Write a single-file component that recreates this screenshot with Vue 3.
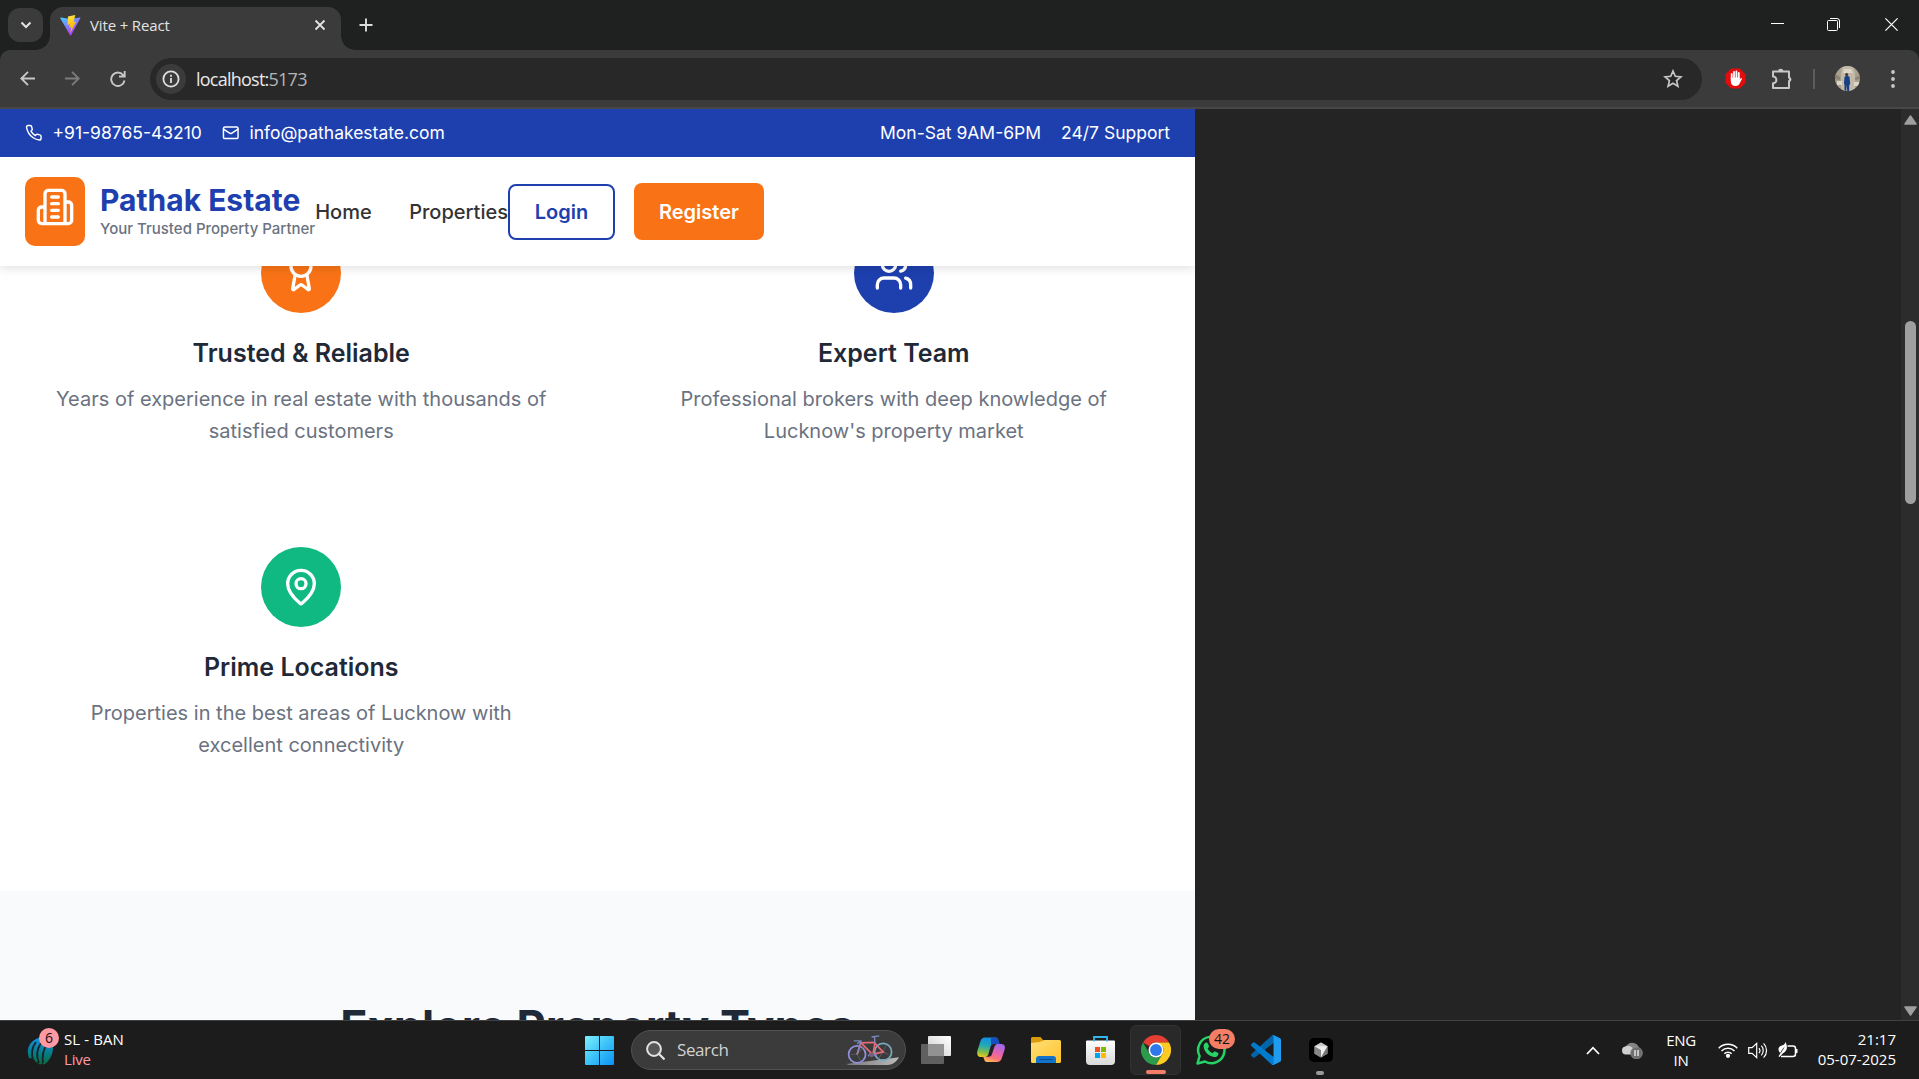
<script setup>
const features = [
  {
    title: 'Trusted & Reliable',
    lines: ['Years of experience in real estate with thousands of', 'satisfied customers'],
    tone: 'orange',
    icon: 'award',
  },
  {
    title: 'Expert Team',
    lines: ['Professional brokers with deep knowledge of', "Lucknow's property market"],
    tone: 'blue',
    icon: 'users',
  },
  {
    title: 'Prime Locations',
    lines: ['Properties in the best areas of Lucknow with', 'excellent connectivity'],
    tone: 'green',
    icon: 'pin',
  },
]
</script>

<template>
  <div class="screen">
    <div class="tabstrip">
      <div class="tab-search">
        <svg width="12" height="8" viewBox="0 0 12 8"><path d="M1.5 1.5 6 6l4.500-4.500" fill="none" stroke="#e3e3e3" stroke-width="2" /></svg>
      </div>
      <div class="tab">
        <svg class="vite" width="21" height="21" viewBox="0 0 21 21">
          <defs>
            <linearGradient id="va" x1="0" y1="0" x2=".6" y2="1"><stop offset="0" stop-color="#41d1ff" /><stop offset="1" stop-color="#bd34fe" /></linearGradient>
            <linearGradient id="vb" x1=".4" y1="0" x2=".6" y2="1"><stop offset="0" stop-color="#ffea83" /><stop offset=".1" stop-color="#ffdd35" /><stop offset="1" stop-color="#ffa800" /></linearGradient>
          </defs>
          <path d="M20.300 3.200 11 20.200a.5.500 0 0 1-.9 0L.3 3.200a.5.500 0 0 1 .5-.8l9.600 1.700 9.400-1.700a.5.500 0 0 1 .5.800Z" fill="url(#va)" />
          <path d="m15 .1-7 1.400-.5 8c0 .2.200.300.400.300l2-.5-.6 3.400 2-.4-.9 4.700c.1.300.400.300.500 0l5-10c.1-.2-.1-.4-.3-.4l-2 .4 1.600-6.600c0-.2-.1-.3-.2-.3Z" fill="url(#vb)" />
        </svg>
        <span class="tab-title">Vite + React</span>
        <svg width="12" height="12" viewBox="0 0 12 12"><path d="m1.500 1.500 9 9m0-9-9 9" stroke="#e3e3e3" stroke-width="1.800" /></svg>
      </div>
      <svg class="plus" width="14" height="14" viewBox="0 0 14 14"><path d="M7 .5v13M.5 7h13" stroke="#dcdcdc" stroke-width="1.900" /></svg>
      <div class="win-controls">
        <svg width="13" height="13" viewBox="0 0 13 13"><path d="M0 5.500h13" stroke="#fff" /></svg>
        <svg width="13" height="13" viewBox="0 0 13 13" fill="none" stroke="#fff"><rect x=".5" y="2.500" width="10" height="10" rx="1" /><path d="M3 .5h7a2.500 2.500 0 0 1 2.500 2.500v7" /></svg>
        <svg width="13" height="13" viewBox="0 0 13 13"><path d="m.4.400 12.200 12.200m0-12.200L.4 12.600" stroke="#fff" stroke-width="1.200" /></svg>
      </div>
    </div>

    <div class="toolbar-wrap">
      <div class="toolbar">
        <svg class="back" width="15" height="15" viewBox="0 0 15 15" fill="none" stroke="#c7c7c7" stroke-width="1.900"><path d="M15 7.500H1.500M8 .8 1.300 7.500 8 14.200" /></svg>
        <svg class="forward" width="15" height="15" viewBox="0 0 15 15" fill="none" stroke="#7c7c7c" stroke-width="1.900"><path d="M0 7.500h13.500M7 .8l6.700 6.700L7 14.200" /></svg>
        <svg class="reload" width="16" height="16" viewBox="0 0 16 16" fill="none" stroke="#c7c7c7" stroke-width="1.900"><path d="M13.600 4.700A6.700 6.700 0 1 0 14.500 9.500M14.700 0v5.500H9" /></svg>
        <div class="address">
          <div class="site-info">
            <svg width="18" height="18" viewBox="0 0 18 18" fill="none" stroke="#dedede" stroke-width="1.800"><circle cx="9" cy="9" r="7.600" /><path d="M9 8v5M9 4.800v1.900" /></svg>
          </div>
          <span class="url">localhost:<i>5173</i></span>
          <svg class="star" width="20" height="19" viewBox="0 0 20 19"><path d="m10 2 2.300 5.300 5.600.5-4.300 3.800 1.300 5.600L10 14.200l-4.900 3 1.300-5.600L2.100 7.800l5.600-.5Z" fill="none" stroke="#c7c7c7" stroke-width="1.700" /></svg>
        </div>
        <svg class="blocker" width="21" height="21" viewBox="0 0 21 21">
          <path d="M6.200.5h8.600l5.700 5.700v8.600l-5.700 5.700H6.200L.5 14.800V6.200Z" fill="#e40d0d" />
          <path d="M6.700 11V6m2.300 4V3.900m2.400 6V3.500m2.400 7V5" stroke="#fff" stroke-width="1.800" stroke-linecap="round" />
          <path d="M5.800 9.500h8.900v2.300l1-1.500c.5-.6 1.500-.2 1.200.7l-2.400 4.800c-.8 1.500-2 2.200-4 2.200-3 0-4.700-1.800-4.700-4.500Z" fill="#fff" />
        </svg>
        <svg class="puzzle" width="22" height="22" viewBox="0 0 22 22"><path d="M2 3.500h16v6.200a2 2 0 0 1 0 3.500V20H2v-4.700a3 3 0 0 0 0-6.800Z" fill="none" stroke="#c7c7c7" stroke-width="2" stroke-linejoin="round" /><path d="M7 3.500a2.700 2.700 0 0 1 5.400 0Zm11 5.500a2.500 2.500 0 0 1 0 5Z" fill="#c7c7c7" /></svg>
        <span class="divider"></span>
        <svg class="avatar" width="25" height="25" viewBox="0 0 25 25">
          <defs><clipPath id="ac"><circle cx="12.500" cy="12.500" r="12.500" /></clipPath></defs>
          <g clip-path="url(#ac)">
            <path fill="#a99f8f" d="M0 0h25v25H0z" />
            <path fill="#c2b9a8" d="M7 0h11l2 7v18H6V8Z" />
            <path fill="#8d8373" d="M0 8l5 3v3L0 13zM25 9l-5 3v2l5-1z" />
            <path fill="#ddd5c6" d="M9 3h7l2 4H8zM2 15h5v4H2zM19 16h5v4h-5z" />
            <circle cx="11.700" cy="8.600" r="1.600" fill="#473a35" />
            <path fill="#173f86" d="M9.500 11c1-1.300 4.200-1.300 5 0l.7 7-1 1v6h-2l-.5-6-.5 6H9.500v-6L9 17Z" />
          </g>
        </svg>
        <svg class="menu" width="4" height="18" viewBox="0 0 4 18" fill="#c7c7c7"><circle cx="2" cy="2" r="1.900" /><circle cx="2" cy="9" r="1.900" /><circle cx="2" cy="16" r="1.900" /></svg>
      </div>
    </div>

    <div class="viewport">
      <div class="page">
        <div class="topbar">
          <svg width="17.500" height="17.500" viewBox="0 0 24 24" class="line"><path d="M22 16.920v3a2 2 0 0 1-2.180 2 19.790 19.790 0 0 1-8.630-3.070 19.500 19.500 0 0 1-6-6 19.790 19.790 0 0 1-3.070-8.670A2 2 0 0 1 4.110 2h3a2 2 0 0 1 2 1.720 12.840 12.840 0 0 0 .7 2.810 2 2 0 0 1-.45 2.110L8.090 9.910a16 16 0 0 0 6 6l1.270-1.270a2 2 0 0 1 2.110-.45 12.840 12.840 0 0 0 2.810.7A2 2 0 0 1 22 16.920z" /></svg>
          <span class="phone">+91-98765-43210</span>
          <svg width="17.500" height="17.500" viewBox="0 0 24 24" class="line"><rect x="2" y="4" width="20" height="16" rx="2" /><path d="m22 7-8.970 5.700a1.940 1.940 0 0 1-2.060 0L2 7" /></svg>
          <span class="mail">info@pathakestate.com</span>
          <span class="hours">Mon-Sat 9AM-6PM</span>
          <span>24/7 Support</span>
        </div>

        <header class="header">
          <div class="logo">
            <svg width="40" height="40" viewBox="0 0 24 24" class="line"><path d="M6 22V4a2 2 0 0 1 2-2h8a2 2 0 0 1 2 2v18ZM6 12H4a2 2 0 0 0-2 2v6a2 2 0 0 0 2 2h2M18 9h2a2 2 0 0 1 2 2v9a2 2 0 0 1-2 2h-2M10 6h4M10 10h4M10 14h4M10 18h4" /></svg>
          </div>
          <div class="brand">
            <span class="name">Pathak Estate</span>
            <span class="tagline">Your Trusted Property Partner</span>
          </div>
          <nav class="nav"><a>Home</a><a>Properties</a></nav>
          <div class="actions">
            <button class="login">Login</button>
            <button class="register">Register</button>
          </div>
        </header>

        <section class="features">
          <article v-for="f in features" :key="f.title" class="card">
            <div class="badge" :class="f.tone">
              <svg width="40" height="40" viewBox="0 0 24 24" class="line">
                <template v-if="f.icon === 'award'">
                  <circle cx="12" cy="8" r="6" />
                  <path d="m15.477 12.890 1.515 8.526a.5.500 0 0 1-.81.470l-3.580-2.687a1 1 0 0 0-1.197 0l-3.586 2.686a.5.500 0 0 1-.81-.469l1.514-8.526" />
                </template>
                <template v-else-if="f.icon === 'users'">
                  <circle cx="9" cy="7" r="4" />
                  <path d="M16 21v-2a4 4 0 0 0-4-4H6a4 4 0 0 0-4 4v2M22 21v-2a4 4 0 0 0-3-3.870M16 3.130a4 4 0 0 1 0 7.750" />
                </template>
                <template v-else>
                  <path d="M20 10c0 4.993-5.539 10.193-7.399 11.799a1 1 0 0 1-1.202 0C9.539 20.193 4 14.993 4 10a8 8 0 0 1 16 0" />
                  <circle cx="12" cy="10" r="3" />
                </template>
              </svg>
            </div>
            <h3>{{ f.title }}</h3>
            <p><span v-for="l in f.lines" :key="l">{{ l }}</span></p>
          </article>
        </section>

        <section class="types"><h2>Explore Property Types</h2></section>
      </div>
      <div class="scrollbar">
        <svg width="13" height="10" viewBox="0 0 13 10"><path d="M6.500 1 12 9H1Z" fill="#9f9f9f" stroke="#9f9f9f" stroke-width="1.500" stroke-linejoin="round" /></svg>
        <span class="thumb"></span>
        <svg width="13" height="10" viewBox="0 0 13 10"><path d="M6.500 9 12 1H1Z" fill="#9f9f9f" stroke="#9f9f9f" stroke-width="1.500" stroke-linejoin="round" /></svg>
      </div>
    </div>

    <footer class="taskbar">
      <div class="widget">
        <div class="widget-icon">
          <svg width="28" height="30" viewBox="0 0 28 30">
            <defs><linearGradient id="wg" x1="0" y1="0" x2="0" y2="1"><stop offset="0" stop-color="#1593e6" /><stop offset=".5" stop-color="#087f98" /><stop offset="1" stop-color="#0b6d3d" /></linearGradient></defs>
            <path d="M2 22C-2 12 4 3 15 1c6 0 11 4 11 11 0 7-4 13-8 16-2 1-3 0-2-2-1 2-3 3-4 2-1 0-1-1-1-2-1 1-3 0-3-2-2 0-2-2-2-3-1 1-3 2-4 1Z" fill="url(#wg)" />
            <path d="M9 6c-4 5-5 11-3 18M14 7c-4 6-5 13-2 20M20 8c-4 6-5 12-4 19" fill="none" stroke="#17232a" stroke-width="1.800" />
          </svg>
          <b>6</b>
        </div>
        <div class="widget-text"><span>SL - BAN</span><span class="live">Live</span></div>
      </div>

      <svg class="start" width="29" height="29" viewBox="0 0 29 29">
        <defs><linearGradient id="sg" gradientUnits="userSpaceOnUse" x1="0" y1="0" x2="29" y2="29"><stop offset="0" stop-color="#7df0ff" /><stop offset=".5" stop-color="#3dc3f8" /><stop offset="1" stop-color="#0a91f6" /></linearGradient></defs>
        <path d="M1 0h13v14H0V1a1 1 0 0 1 1-1Zm14 0h13a1 1 0 0 1 1 1v13H15ZM0 15h14v14H1a1 1 0 0 1-1-1Zm15 0h14v13a1 1 0 0 1-1 1H15Z" fill="url(#sg)" />
      </svg>

      <div class="search">
        <svg width="19" height="19" viewBox="0 0 19 19" fill="none" stroke="#e2e2e2" stroke-width="2"><circle cx="8" cy="8" r="6.900" fill="#575757" /><path d="m12.800 12.800 5 5" stroke-width="2.300" stroke-linecap="round" /></svg>
        <span>Search</span>
        <svg class="bike" width="54" height="31" viewBox="0 0 56 32" fill="none">
          <defs><linearGradient id="bg" x1="0" x2="1"><stop offset="0" stop-color="#777" /><stop offset="1" stop-color="#bbb" /></linearGradient></defs>
          <path d="M0 30 55 23c-3 5-7 8-12 8H3Z" fill="url(#bg)" />
          <circle cx="11.500" cy="20" r="8.800" stroke="#918fdc" stroke-width="1.800" />
          <circle cx="38.500" cy="17.500" r="8.800" stroke="#79a9bf" stroke-width="1.800" />
          <path d="m11.500 20 9-10m-9 10H5m6.500 0 4 7M38.500 17.500l6 3m-6-3-5 7m5-7 3-7" stroke="#596078" stroke-width=".8" />
          <path d="M11.500 20 15.500 8l12 12 11-2.500L30 8.500l-2 11M15 8l15-.5" stroke="#e56b76" stroke-width="1.800" />
          <path d="m11.500 20 4-14H8m7.500 0-4 3M30 8.500 29.500 2m-3 0 8-1.200M26 20l6 1m-7-2-2 3" stroke="#7c87bd" stroke-width="1.500" />
          <circle cx="26.500" cy="20.500" r="2.500" fill="#75617d" />
        </svg>
      </div>

      <div class="apps">
        <div class="app">
          <svg width="30" height="28" viewBox="0 0 30 28"><defs><linearGradient id="tg" x1="1" y1="0" x2="0" y2="1"><stop offset="0" stop-color="#fff" /><stop offset="1" stop-color="#ccc" /></linearGradient></defs><rect x="7" width="23" height="20" rx="1" fill="url(#tg)" /><path d="M1 8h22v19a1 1 0 0 1-1 1H1a1 1 0 0 1-1-1V9a1 1 0 0 1 1-1Z" fill="#606060" /><path d="M7 8h16v12H7Z" fill="#929292" /></svg>
        </div>
        <div class="app">
          <svg width="28" height="26" viewBox="0 0 28 26">
            <defs>
              <linearGradient id="ca" x1=".3" y1="0" x2=".1" y2="1"><stop offset="0" stop-color="#168de2" /><stop offset=".4" stop-color="#22aab6" /><stop offset=".75" stop-color="#8bbd41" /><stop offset="1" stop-color="#f4ce1c" /></linearGradient>
              <linearGradient id="cb" x1=".7" y1="0" x2=".3" y2="1"><stop offset="0" stop-color="#a067e8" /><stop offset=".45" stop-color="#e563b1" /><stop offset=".75" stop-color="#fb7275" /><stop offset="1" stop-color="#ffba55" /></linearGradient>
            </defs>
            <path d="M8 .5h10.500c2 0 2.500 1.500 3 3.500l1 3H17c-2 0-3 1-3.500 3l-2 7c-.7 2-1.500 3-3.500 3H3.500C.5 20-.5 17 .5 13.500L3.500 4C4.300 1.500 6 .5 8 .5Z" fill="url(#ca)" />
            <path d="M14 .5h4.500c2 0 2.500 1.500 3 3.500l1 3H17c-1.500 0-2.500.5-3 2Z" fill="#174fc2" />
            <path d="M20 25H10c-2 0-2.500-1.500-3-3l-.7-2H8c2 0 3-1 3.500-3l2-7c.5-2 1.500-3 3.500-3h7.500c3 0 4 2.500 3 6L24.500 22c-.8 2-2.500 3-4.500 3Z" fill="url(#cb)" />
            <path d="M17 7c-2 0-3 1-3.500 3l-2 7c-.4 1.400-1 2.300-2 2.800h2c2 0 3-1 3.500-2.800L17 11c.6-2 1.400-3.500 3-4Z" fill="#222" />
          </svg>
        </div>
        <div class="app">
          <svg width="30" height="27" viewBox="0 0 30 27"><defs><linearGradient id="fg" x1="0" y1="0" x2="1" y2="1"><stop offset="0" stop-color="#ffdf78" /><stop offset="1" stop-color="#ffc32c" /></linearGradient></defs><path d="M0 1.500A1.500 1.500 0 0 1 1.500 0h8L12 3v5H0Z" fill="#dc9b0d" /><path d="M0 6 9 5l4-2h15.500A1.500 1.500 0 0 1 30 4.500v20a1.500 1.500 0 0 1-1.500 1.500h-27A1.500 1.500 0 0 1 0 24.500Z" fill="url(#fg)" /><path d="M5 26v-4a3 3 0 0 1 3-3h14a3 3 0 0 1 3 3v4Z" fill="#1173c9" /><path d="M8.500 22.500h13" stroke="#0a4b91" /></svg>
        </div>
        <div class="app">
          <svg width="29" height="29" viewBox="0 0 29 29"><defs><linearGradient id="mg" x2="0" y2="1"><stop offset="0" stop-color="#fff" /><stop offset="1" stop-color="#d9d9d9" /></linearGradient></defs><path d="M8 6V1h13v5" fill="none" stroke="#32b7ec" stroke-width="1.800" /><path d="M1 4.500h27a1 1 0 0 1 1 1V25a4 4 0 0 1-4 4H4a4 4 0 0 1-4-4V5.500a1 1 0 0 1 1-1Z" fill="url(#mg)" /><path d="M8 5.500V3.500M21 5.500V3.500" stroke="#32b7ec" stroke-width="1.800" /><path d="M9 11h5v5H9Z" fill="#f25022" /><path d="M15 11h5v5h-5Z" fill="#7fba00" /><path d="M9 17h5v5H9Z" fill="#00a4ef" /><path d="M15 17h5v5h-5Z" fill="#ffb900" /></svg>
        </div>
        <div class="app active">
          <svg width="30" height="30" viewBox="0 0 48 48"><path d="M24 0a24 24 0 0 1 20.800 12H24a12 12 0 0 0-10.400 6L3.200 12A24 24 0 0 1 24 0Z" fill="#e63e32" /><path d="M3.200 12A24 24 0 0 0 24 48l10.400-18a12 12 0 0 1-20.800 0Z" fill="#2b9c4b" /><path d="M44.800 12A24 24 0 0 1 24 48l10.400-18A12 12 0 0 0 34.400 18L24 12Z" fill="#fdcb22" /><circle cx="24" cy="24" r="12" fill="#fff" /><circle cx="24" cy="24" r="9.500" fill="#2f78ec" /></svg>
          <span class="running"></span>
        </div>
        <div class="app">
          <svg width="30" height="30" viewBox="0 0 30 30"><path d="M1.500 28.500 3.600 21A13.200 13.200 0 1 1 9 26.500Z" fill="#1c1c1c" stroke="#25d366" stroke-width="2.500" stroke-linejoin="round" /><path d="M10.500 7.500c.6 0 .9.200 1.200.8l1.200 2.800c.2.500 0 1-.4 1.400l-.9 1c1.100 2.200 2.700 3.700 5 4.700l1.200-1.400c.4-.5.800-.5 1.300-.3l2.700 1.300c.6.300.7.600.6 1.200-.4 2-2 3.300-4.200 3.100C12.600 21.600 8 16.500 7.600 11.600c0-2 1.100-4.100 2.900-4.100Z" fill="#25d366" /></svg>
          <b class="count">42</b>
        </div>
        <div class="app">
          <svg width="30" height="30" viewBox="0 0 100 100"><path d="M96.500 10.800 75.900.9a6.200 6.200 0 0 0-7.100 1.200L1.400 63.600a4.200 4.200 0 0 0 0 6.200l5.500 5a4.200 4.200 0 0 0 5.300.2L93.400 13.400a4.100 4.100 0 0 1 6.600 3.300v-.2a6.300 6.300 0 0 0-3.500-5.700Z" fill="#0065a9" /><path d="m96.500 89.300-20.600 9.900a6.200 6.200 0 0 1-7.100-1.200L1.400 36.500a4.200 4.200 0 0 1 0-6.200l5.500-5a4.200 4.200 0 0 1 5.300-.2l81.200 61.600a4.100 4.100 0 0 0 6.600-3.300v.200a6.300 6.300 0 0 1-3.500 5.700Z" fill="#007acc" /><path d="M75.900 99.200A6.200 6.200 0 0 1 68.800 98c2.300 2.300 6.300.7 6.300-2.600V4.700c0-3.300-4-4.900-6.300-2.600A6.200 6.200 0 0 1 75.900.9l20.600 9.900a6.300 6.300 0 0 1 3.500 5.700v67.100a6.300 6.300 0 0 1-3.500 5.700Z" fill="#1f9cf0" /></svg>
        </div>
        <div class="app">
          <svg width="24" height="24" viewBox="0 0 24 24"><rect width="24" height="24" rx="5" fill="#000" /><path d="m12 4.500 6.500 3.700v7.600L12 19.500l-6.500-3.700V8.200Z" fill="#9a9a9a" /><path d="m5.500 8.200 6.500 3.800v7.500l-6.500-3.700Z" fill="#858585" /><path d="m12 4.500 6.500 3.700L12 10 5.500 8.200Z" fill="#c9c9c9" /><path d="M5.500 8.200h13L12 19.500V12Z" fill="#eee" /><path d="M18.500 8.200 12 19.500l6.500-3.700Z" fill="#777" /></svg>
          <span class="running idle"></span>
        </div>
      </div>

      <div class="tray">
        <svg width="14" height="9" viewBox="0 0 14 9"><path d="m1 8 6-6.300L13 8" fill="none" stroke="#fff" stroke-width="1.800" /></svg>
        <svg class="cloud" width="21" height="18" viewBox="0 0 21 18"><path d="M5 13a5 5 0 0 1 0-9 7 7 0 0 1 12 3v6Z" fill="#858585" /><path d="M4 13.500a4 4 0 0 1 0-8c2-1 5-.5 6.500 1.500l4 1v5.500Z" fill="#d0d0d0" /><circle cx="14.500" cy="12" r="5.900" fill="#6e6e6e" stroke="#8b8b8b" stroke-width=".7" /><path d="M13 9v6m3-6v6" stroke="#fff" stroke-width="1.200" /></svg>
        <div class="lang"><span>ENG</span><span>IN</span></div>
        <svg class="wifi" width="20" height="16" viewBox="0 0 20 16" fill="none" stroke="#fff" stroke-width="1.500"><path d="M.7 6.200a13 13 0 0 1 18.600 0M3.500 9a9.200 9.200 0 0 1 13 0M6.300 11.700a5.300 5.300 0 0 1 7.400 0" /><circle cx="10" cy="13.800" r="1.400" fill="#fff" /></svg>
        <svg class="speaker" width="20" height="17" viewBox="0 0 20 17" fill="none" stroke="#fff" stroke-width="1.200"><path d="M.7 5.700h3.400l4.600-4.300v14.200l-4.600-4.300H.7ZM11 6a4 4 0 0 1 0 5M13.300 3.700a7 7 0 0 1 0 9.600M15.600 1.300a10.300 10.300 0 0 1 0 14.400" /></svg>
        <svg class="battery" width="20" height="17" viewBox="0 0 20 17"><path d="M9.500 4h5.500a2.500 2.500 0 0 1 2.500 2.500V12a2.500 2.500 0 0 1-2.500 2.500H3" fill="none" stroke="#fff" stroke-width="1.500" /><path d="M18 7h1.500v4H18Z" fill="#fff" /><path d="M7.500 0c2 4 2.500 9-2.500 11.300L1.500 15l-1-.7 2-3C-1 8 .5 4 4 3.500 6 3 7 2 7.500 0Z" fill="#fff" /><path d="M6 5.500 2.500 11" stroke="#1c1c1c" stroke-width=".8" /></svg>
        <div class="clock"><span>21:17</span><span>05-07-2025</span></div>
      </div>
    </footer>
  </div>
</template>

<style>
body { margin: 0; background: #1c1c1c; }
</style>

<style scoped>
* { box-sizing: border-box; }
svg { display: block; flex: none; }
.screen { width: 1919px; height: 1079px; display: flex; flex-direction: column; overflow: hidden; font-family: "Open Sans", "Noto Sans", sans-serif; background: #1f2120; }
.line { fill: none; stroke: #fff; stroke-width: 2; stroke-linecap: round; stroke-linejoin: round; }

.tabstrip { height: 50px; flex: none; display: flex; align-items: flex-start; background: #1f2120; }
.tab-search { width: 35px; height: 34px; margin: 8px 0 0 8px; border-radius: 12px; background: #3b3b3b; display: flex; align-items: center; justify-content: center; }
.tab { position: relative; width: 291px; height: 43px; margin: 7px 0 0 7px; padding: 0 15px 7px 10px; border-radius: 13px 13px 0 0; background: #3b3b3b; display: flex; align-items: center; }
.tab::before, .tab::after { content: ''; position: absolute; bottom: 0; width: 14px; height: 14px; }
.tab::before { left: -14px; background: radial-gradient(circle at 0 0, transparent 13.500px, #3b3b3b 14px); }
.tab::after { right: -14px; background: radial-gradient(circle at 100% 0, transparent 13.500px, #3b3b3b 14px); }
.tab-title { flex: 1; margin: 0 0 1px 9px; font-size: 15px; line-height: 20px; letter-spacing: -0.150px; color: #e3e3e3; white-space: nowrap; }
.plus { margin: 18px 0 0 18px; }
.win-controls { display: flex; gap: 43px; margin: 18px 21px 0 auto; }
.win-controls svg:nth-child(2) { margin-right: 2px; }

.toolbar-wrap { height: 59px; flex: none; background: #1f2120; }
.toolbar { height: 59px; display: flex; align-items: center; background: #3b3b3b; border-bottom: 2px solid #474747; border-radius: 10px 10px 0 0; }
.back { margin-left: 20px; }
.forward { margin-left: 30px; }
.reload { margin-left: 30px; }
.address { width: 1552px; height: 42px; margin-left: 24px; padding: 0 19px 0 6px; border-radius: 21px; background: #282828; display: flex; align-items: center; }
.site-info { width: 30px; height: 30px; border-radius: 50%; background: #3b3b3b; display: flex; align-items: center; justify-content: center; }
.url { flex: 1; margin-left: 10px; font-size: 18px; line-height: 24px; letter-spacing: -0.760px; color: #e8e8e8; }
.url i { font-style: normal; color: #b5b5b5; }
.blocker { margin-left: 23px; }
.puzzle { margin-left: 25px; }
.divider { width: 2px; height: 20px; margin-left: 20px; background: #5c5c5c; }
.avatar { margin-left: 20px; }
.menu { margin-left: 31px; }

.viewport { height: 911px; flex: none; display: flex; justify-content: space-between; overflow: hidden; background: #242424; }
.page { width: 1195px; height: 911px; overflow: hidden; background: #fff; font-family: Inter, "Liberation Sans", sans-serif; }
.topbar { position: relative; z-index: 2; height: 48px; padding: 0 25px; display: flex; align-items: center; background: #1e40af; color: #fff; font-size: 17.500px; font-weight: 400; white-space: nowrap; }
.topbar span { line-height: 20px; padding-bottom: 1px; }
.topbar .phone { margin: 0 20px 0 10px; }
.topbar .mail { margin-left: 10px; }
.topbar .hours { margin: 0 20px 0 auto; }
.header { position: relative; z-index: 1; height: 109px; padding: 0 25px; display: flex; align-items: center; background: #fff; box-shadow: 0 2px 10px rgba(0, 0, 0, 0.130); white-space: nowrap; }
.logo { width: 60px; height: 69px; padding: 10px; margin-right: 15px; border-radius: 10px; background: #f97316; }
.brand { display: flex; flex-direction: column; padding-bottom: 4px; }
.name { font-size: 30px; line-height: 36px; font-weight: 700; color: #1e40af; }
.tagline { padding-top: 1px; font-size: 15px; line-height: 19px; font-weight: 500; color: #6b7280; }
.nav { display: flex; gap: 37.500px; font-size: 20px; font-weight: 500; color: #333; }
.actions { display: flex; align-items: center; gap: 19px; }
.actions button { font: 600 20px/24px Inter, sans-serif; border-radius: 8px; }
.login { width: 107px; height: 56px; padding: 0; background: #fff; border: 2px solid #1e40af; color: #1e40af; }
.register { width: 130px; height: 57px; padding: 0; background: #f97316; border: 0; color: #fff; }

.features { margin-top: -163px; height: 788px; padding: 100px 25px; display: grid; grid-template-columns: 552.500px 552.500px; gap: 40px; align-content: start; background: #fff; }
.card { height: 274px; padding: 30px 0; display: flex; flex-direction: column; align-items: center; text-align: center; }
.badge { width: 80px; height: 80px; border-radius: 50%; display: flex; align-items: center; justify-content: center; }
.orange { background: #f97316; }
.blue { background: #1e40af; }
.green { background: #10b981; }
.card h3 { margin: 25px 0 15px; font-size: 25px; line-height: 30px; font-weight: 600; color: #1f2937; }
.card p { margin: 0; display: flex; flex-direction: column; font-size: 20px; line-height: 32px; color: #6b7280; white-space: nowrap; }
.types { height: 220px; padding-top: 100px; background: #f8fafc; }
.types h2 { margin: 0; font-size: 45px; line-height: 72px; font-weight: 700; text-align: center; color: #1f2937; white-space: nowrap; }
.scrollbar { width: 18px; height: 911px; padding: 6px 0 4px 3px; display: flex; flex-direction: column; background: #2c2c2c; }
.thumb { width: 11px; height: 183px; margin: 196px 0 auto 1px; border-radius: 6px; background: #9f9f9f; }

.taskbar { height: 59px; flex: none; display: flex; align-items: center; border-top: 1px solid #414141; background: #1c1c1c; color: #fff; font-size: 15px; line-height: 20px; white-space: nowrap; }
.widget { width: 558px; display: flex; align-items: center; padding-left: 27px; }
.widget-icon { position: relative; width: 37px; height: 34px; padding-top: 3px; }
.widget-icon b { position: absolute; left: 12px; top: -5px; width: 20px; height: 20px; border-radius: 50%; background: #ff99a4; color: #111; font-weight: 400; font-size: 14px; text-align: center; }
.widget-text { display: flex; flex-direction: column; padding-bottom: 2px; }
.widget-text span:first-child { letter-spacing: 0.100px; }
.live { color: #ff99a4; letter-spacing: -0.200px; }
.start { margin-left: 27px; }
.search { width: 275px; height: 40px; margin-left: 17px; padding: 0 5px 0 14px; border: 1px solid #515151; border-radius: 20px; background: #3b3b3b; display: flex; align-items: center; }
.search span { flex: 1; margin-left: 12px; font-size: 17px; letter-spacing: -0.400px; color: #d2d2d2; }
.apps { display: flex; margin-left: 2px; }
.app { position: relative; width: 51px; height: 50px; margin: 0 2px; border-radius: 6px; display: flex; align-items: center; justify-content: center; }
.active { background: #292929; border: 1px solid #313131; }
.running { position: absolute; bottom: 0; left: 15px; width: 20px; height: 4px; border-radius: 2px; background: #f47f66; }
.running.idle { left: 21px; width: 8px; background: #9a9a9a; }
.count { position: absolute; left: 24px; top: 4px; width: 26px; height: 20px; border-radius: 10px; background: #f47f66; color: #111; font-size: 14px; font-weight: 400; text-align: center; }
.tray { display: flex; align-items: center; margin: 0 23px 0 auto; }
.cloud { margin-left: 22px; }
.lang { width: 40px; margin-left: 18px; padding-bottom: 1px; display: flex; flex-direction: column; text-align: center; letter-spacing: -0.300px; }
.wifi { margin-left: 17px; }
.speaker, .battery { margin-left: 10px; }
.clock { width: 98px; padding-bottom: 2px; display: flex; flex-direction: column; text-align: right; }
</style>
